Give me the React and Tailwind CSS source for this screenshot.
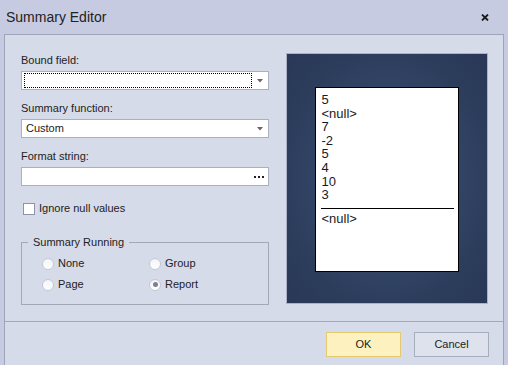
import { useState } from "react";

const Combo = ({ value, focused }) => (
  <div className="relative flex h-[19px] items-center border border-[#aab0c2] bg-white">
    {focused ? (
      <div className="ml-[2px] h-[15px] w-[228px] border border-dotted border-black" />
    ) : (
      <span className="pl-[4px] text-[11px] leading-[13px] text-[#222]">{value}</span>
    )}
    <svg className="absolute right-[5px] top-[7px]" width="6" height="4" viewBox="0 0 6 4">
      <path d="M0 0 H6 L3 3.5 Z" fill="#666" />
    </svg>
  </div>
);

const Radio = ({ label, checked }) => (
  <div className="flex items-center">
    <div className="flex h-[12px] w-[12px] items-center justify-center rounded-full border border-[#c3c8d6] bg-gradient-to-b from-[#f3f4f8] to-white">
      {checked && <div className="h-[5px] w-[5px] rounded-full bg-[#7b8093]" />}
    </div>
    <span className="ml-[4px] text-[11px] leading-[13px] text-[#222]">{label}</span>
  </div>
);

const valores = ["5", "<null>", "7", "-2", "5", "4", "10", "3"];

const App = () => {
  const [ignorar, setIgnorar] = useState(false);

  return (
    <div className="flex h-[365px] w-[508px] flex-col overflow-hidden bg-[#c6cbe1] font-['Liberation_Sans',Arial,sans-serif]">
      {/* barra de titulo */}
      <div className="flex h-[34px] shrink-0 items-center justify-between pl-[6px] pr-[19px]">
        <span className="text-[14px] text-[#222]">Summary Editor</span>
        <svg width="8" height="7" viewBox="0 0 8 7">
          <path d="M1 0.5 L7 6.5 M7 0.5 L1 6.5" stroke="#1b1b1b" strokeWidth="1.8" />
        </svg>
      </div>

      <div className="ml-[4px] mr-[4px] flex flex-1 flex-col border-l border-r border-t border-[#9ea5bb] bg-[#d6dbe9]">
        <div className="flex h-[287px] shrink-0 border-b border-[#a3a9b9]">
          {/* coluna esquerda */}
          <div className="ml-[16px] flex w-[248px] flex-col pt-[19px] text-[11px] leading-[13px] text-[#222]">
            <label>Bound field:</label>
            <div className="mt-[4px]">
              <Combo focused />
            </div>

            <label className="mt-[12px]">Summary function:</label>
            <div className="mt-[4px]">
              <Combo value="Custom" />
            </div>

            <label className="mt-[12px]">Format string:</label>
            <div className="relative mt-[4px] h-[19px] border border-[#aab0c2] bg-white">
              <svg className="absolute right-[4px] top-[8px]" width="10" height="2" viewBox="0 0 10 2">
                <rect x="0" y="0" width="2" height="2" fill="#222" />
                <rect x="4" y="0" width="2" height="2" fill="#222" />
                <rect x="8" y="0" width="2" height="2" fill="#222" />
              </svg>
            </div>

            <div
              className="mt-[16px] ml-[2px] flex cursor-default items-center"
              onClick={() => setIgnorar(!ignorar)}
            >
              <div className="h-[12px] w-[12px] border border-[#8e94a6] bg-white" />
              <span className="ml-[4px]">Ignore null values</span>
            </div>

            <fieldset className="mt-[21px] h-[69px] border border-[#a3a8b7]">
              <legend className="ml-[6px] px-[5px] leading-[13px]">Summary Running</legend>
              <div className="mt-[8px] ml-[20px] grid grid-cols-[107px_1fr] gap-y-[8px]">
                <Radio label="None" />
                <Radio label="Group" />
                <Radio label="Page" />
                <Radio label="Report" checked />
              </div>
            </fieldset>
          </div>

          {/* pre-visualizacao */}
          <div className="ml-[17px] mt-[18px] flex h-[251px] w-[202px] items-start justify-center border border-[#a9b2c6] bg-[radial-gradient(ellipse_at_center,#3e557b_0%,#2c3c5b_75%,#293856_100%)] pt-[33px]">
            <div className="ml-[-1px] flex h-[185px] w-[144px] flex-col border border-black bg-white pl-[6px] pr-[4px] pt-[5px] text-[13px] leading-[13.6px] text-[#1a1a1a]">
              {valores.map((v, i) => (
                <span key={i}>{v}</span>
              ))}
              <div className="ml-[-1px] mt-[6px] h-[1.5px] bg-black" />
              <span className="mt-[3px]">{"<null>"}</span>
            </div>
          </div>
        </div>

        {/* botoes */}
        <div className="flex justify-end gap-[13px] pr-[14px] pt-[10px] text-[11px] text-[#222]">
          <button className="h-[25px] w-[75px] border border-[#e4c973] bg-[#fcf1bf]">OK</button>
          <button className="h-[25px] w-[75px] border border-[#a9aebf] bg-[#dee2ed]">Cancel</button>
        </div>
      </div>
    </div>
  );
};

export default App;
